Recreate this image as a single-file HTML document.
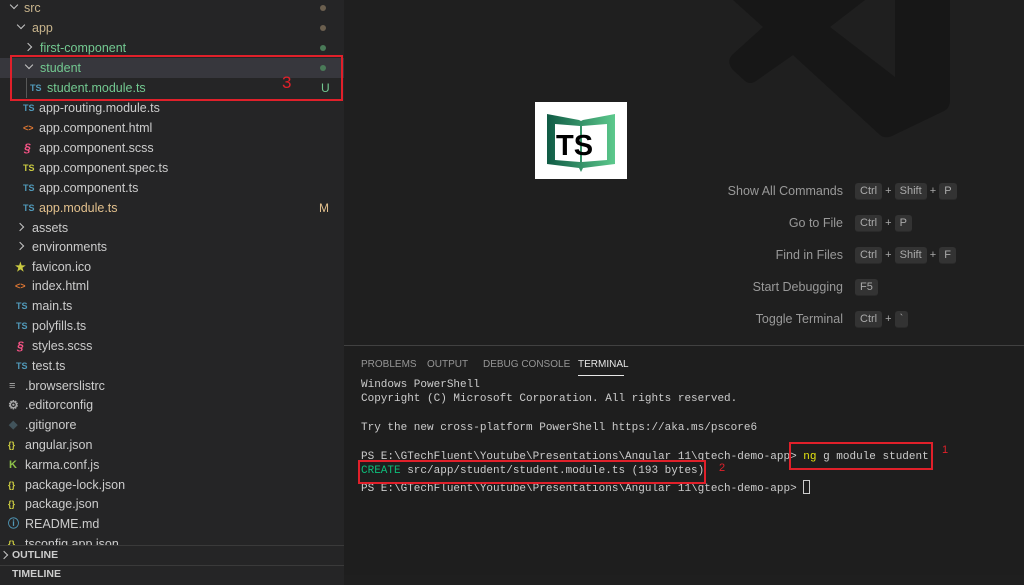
<!DOCTYPE html><html><head><style>
*{margin:0;padding:0;box-sizing:border-box}
body{width:1024px;height:575px;overflow:hidden;background:#1f1f1f;font-family:"Liberation Sans",sans-serif;font-size:12.5px;color:#cccccc;position:relative}
.side{position:absolute;left:0;top:0;width:344px;height:575px;background:#252526}
.r{position:absolute;height:20px;line-height:20px;white-space:nowrap;left:0;width:344px}
.ic{position:absolute;font-size:9px;font-weight:bold;top:0}
.chev{position:absolute;top:6px;width:6px;height:6px;border-right:1.3px solid #c5c5c5;border-bottom:1.3px solid #c5c5c5}
.dn{transform:rotate(45deg);top:4px}
.rt{transform:rotate(-45deg)}
.dot{position:absolute;left:320px;top:7px;width:6px;height:6px;border-radius:50%}
.mono{font-family:"Liberation Mono",monospace;font-size:11px}
.key{display:inline-block;background:#333;border-radius:3px;padding:0 5px;height:17px;line-height:17px;font-size:11px;color:#aaa;border-bottom:1px solid #2a2a2a}
.sc{position:absolute;height:18px;line-height:18px;color:#999;width:0}
.sc .l{position:absolute;right:12px;width:200px;text-align:right;font-size:12.5px}
.sc .k{position:absolute;left:0;white-space:nowrap;font-size:11px;color:#aaa}
.tl{position:absolute;left:361px;white-space:pre;color:#cccccc}
.tab{position:absolute;top:13px;font-size:10px;color:#969696;white-space:nowrap}
</style></head><body>
<svg style="position:absolute;left:0;top:0" width="1024" height="160">
<path d="M733 0 L763 27 L732 55 Q726 62 733 70 L745 81 Q750 85 756 81 L793 55 L880 135 Q885 139 892 136 L944 111 Q950 108 950 100 L950 0 Z M865 0 L895 0 L895 77 L830 27 Z" fill="#171717" fill-rule="evenodd"/>
</svg>
<div class="side">
<div class="r" style="top:-2px"><span class="chev dn" style="left:11px"></span><span style="position:absolute;left:24px;color:#c8b48c">src</span><span class="dot" style="background:#6b5f4e"></span></div>
<div class="r" style="top:18px"><span class="chev dn" style="left:18px"></span><span style="position:absolute;left:32px;color:#c8b48c">app</span><span class="dot" style="background:#6b5f4e"></span></div>
<div class="r" style="top:38px"><span class="chev rt" style="left:25px"></span><span style="position:absolute;left:40px;color:#73c991">first-component</span><span class="dot" style="background:#4a7a58"></span></div>
<div class="r" style="top:58px;background:#37373d"><span class="chev dn" style="left:26px"></span><span style="position:absolute;left:40px;color:#73c991">student</span><span class="dot" style="background:#4a7a58"></span></div>
<div class="r" style="top:78px"><span style="position:absolute;left:26px;top:0;width:1px;height:20px;background:#585858"></span><span class="ic" style="left:30px;color:#519aba">TS</span><span style="position:absolute;left:47px;color:#73c991">student.module.ts</span><span style="position:absolute;left:321px;color:#73c991;font-size:12px">U</span></div>
<div class="r" style="top:98px"><span class="ic" style="left:23px;color:#519aba">TS</span><span style="position:absolute;left:39px">app-routing.module.ts</span></div>
<div class="r" style="top:118px"><span class="ic" style="left:23px;color:#e37933">&lt;&gt;</span><span style="position:absolute;left:39px">app.component.html</span></div>
<div class="r" style="top:138px"><span class="ic" style="left:24px;color:#f55385;font-style:italic;font-size:12px">§</span><span style="position:absolute;left:39px">app.component.scss</span></div>
<div class="r" style="top:158px"><span class="ic" style="left:23px;color:#cbcb41">TS</span><span style="position:absolute;left:39px">app.component.spec.ts</span></div>
<div class="r" style="top:178px"><span class="ic" style="left:23px;color:#519aba">TS</span><span style="position:absolute;left:39px">app.component.ts</span></div>
<div class="r" style="top:198px"><span class="ic" style="left:23px;color:#519aba">TS</span><span style="position:absolute;left:39px;color:#e2c08d">app.module.ts</span><span style="position:absolute;left:319px;color:#e2c08d;font-size:12px">M</span></div>
<div class="r" style="top:218px"><span class="chev rt" style="left:17px"></span><span style="position:absolute;left:32px">assets</span></div>
<div class="r" style="top:237px"><span class="chev rt" style="left:17px"></span><span style="position:absolute;left:32px">environments</span></div>
<div class="r" style="top:257px"><span class="ic" style="left:15px;color:#cbcb41;font-size:12px">★</span><span style="position:absolute;left:32px">favicon.ico</span></div>
<div class="r" style="top:276px"><span class="ic" style="left:15px;color:#e37933">&lt;&gt;</span><span style="position:absolute;left:32px">index.html</span></div>
<div class="r" style="top:296px"><span class="ic" style="left:16px;color:#519aba">TS</span><span style="position:absolute;left:32px">main.ts</span></div>
<div class="r" style="top:316px"><span class="ic" style="left:16px;color:#519aba">TS</span><span style="position:absolute;left:32px">polyfills.ts</span></div>
<div class="r" style="top:336px"><span class="ic" style="left:17px;color:#f55385;font-style:italic;font-size:12px">§</span><span style="position:absolute;left:32px">styles.scss</span></div>
<div class="r" style="top:356px"><span class="ic" style="left:16px;color:#519aba">TS</span><span style="position:absolute;left:32px">test.ts</span></div>
<div class="r" style="top:376px"><span class="ic" style="left:9px;color:#aaa;font-size:11px">≡</span><span style="position:absolute;left:25px">.browserslistrc</span></div>
<div class="r" style="top:395px"><span class="ic" style="left:8px;color:#aaa;font-size:12px">⚙</span><span style="position:absolute;left:25px">.editorconfig</span></div>
<div class="r" style="top:415px"><span class="ic" style="left:9px;color:#41535b;font-size:11px">◆</span><span style="position:absolute;left:25px">.gitignore</span></div>
<div class="r" style="top:435px"><span class="ic" style="left:8px;color:#cbcb41">{}</span><span style="position:absolute;left:25px">angular.json</span></div>
<div class="r" style="top:455px"><span class="ic" style="left:9px;color:#8dc149;font-size:11px">K</span><span style="position:absolute;left:25px">karma.conf.js</span></div>
<div class="r" style="top:475px"><span class="ic" style="left:8px;color:#cbcb41">{}</span><span style="position:absolute;left:25px">package-lock.json</span></div>
<div class="r" style="top:494px"><span class="ic" style="left:8px;color:#cbcb41">{}</span><span style="position:absolute;left:25px">package.json</span></div>
<div class="r" style="top:514px"><span class="ic" style="left:8px;color:#519aba;font-size:11px">ⓘ</span><span style="position:absolute;left:25px">README.md</span></div>
<div class="r" style="top:534px"><span class="ic" style="left:8px;color:#cbcb41">{}</span><span style="position:absolute;left:25px">tsconfig.app.json</span></div>
<div style="position:absolute;top:545px;left:0;width:344px;height:20px;background:#252526;border-top:1px solid #3a3a3a;line-height:19px;font-size:10.5px;font-weight:bold"><span class="chev rt" style="left:1px;top:6px"></span><span style="position:absolute;left:12px">OUTLINE</span></div>
<div style="position:absolute;top:565px;left:0;width:344px;height:20px;background:#252526;border-top:1px solid #3a3a3a;line-height:17px;font-size:10.5px;font-weight:bold"><span style="position:absolute;left:12px">TIMELINE</span></div>
</div>
<div style="position:absolute;left:10px;top:55px;width:333px;height:46px;border:2px solid #e0202a"></div>
<div style="position:absolute;left:282px;top:73px;color:#e0202a;font-size:17px">3</div>

<div style="position:absolute;left:535px;top:102px;width:92px;height:77px;background:#fff">
<svg width="92" height="77" viewBox="0 0 92 77"><defs><linearGradient id="g" x1="0" x2="1"><stop offset="0" stop-color="#0f5a44"/><stop offset="1" stop-color="#5cc98c"/></linearGradient></defs><path d="M12 12 L44 18 L46 19 L48 18 L80 12 L80 62 L48 66 L46 70 L44 66 L12 62Z" fill="url(#g)"/><path d="M20 22 L45 24 L45 60 L20 58Z M47 24 L72 22 L72 58 L47 60Z" fill="#fff"/><text x="21" y="53" font-family="Liberation Sans" font-weight="bold" font-size="29" fill="#000">TS</text></svg></div>

<div class="sc" style="left:855px;top:182px"><span class="l">Show All Commands</span><span class="k"><span class="key">Ctrl</span> + <span class="key">Shift</span> + <span class="key">P</span></span></div>
<div class="sc" style="left:855px;top:214px"><span class="l">Go to File</span><span class="k"><span class="key">Ctrl</span> + <span class="key">P</span></span></div>
<div class="sc" style="left:855px;top:246px"><span class="l">Find in Files</span><span class="k"><span class="key">Ctrl</span> + <span class="key">Shift</span> + <span class="key">F</span></span></div>
<div class="sc" style="left:855px;top:278px"><span class="l">Start Debugging</span><span class="k"><span class="key">F5</span></span></div>
<div class="sc" style="left:855px;top:310px"><span class="l">Toggle Terminal</span><span class="k"><span class="key">Ctrl</span> + <span class="key">`</span></span></div>

<div style="position:absolute;left:344px;top:345px;width:680px;height:230px;background:#1e1e1e;border-top:1px solid #414141">
<span class="tab" style="left:17px">PROBLEMS</span><span class="tab" style="left:83px">OUTPUT</span><span class="tab" style="left:139px">DEBUG CONSOLE</span><span class="tab" style="left:234px;color:#e7e7e7">TERMINAL</span>
<div style="position:absolute;left:234px;top:29px;width:46px;height:1px;background:#e7e7e7"></div>
</div>
<div class="tl mono" style="top:379px">Windows PowerShell</div>
<div class="tl mono" style="top:393px">Copyright (C) Microsoft Corporation. All rights reserved.</div>
<div class="tl mono" style="top:422px">Try the new cross-platform PowerShell https://aka.ms/pscore6</div>
<div class="tl mono" style="top:451px">PS E:\GTechFluent\Youtube\Presentations\Angular 11\gtech-demo-app> <span style="color:#e5e510">ng</span> g module student</div>
<div class="tl mono" style="top:465px"><span style="color:#0dbc79">CREATE</span> src/app/student/student.module.ts (193 bytes)</div>
<div class="tl mono" style="top:480px">PS E:\GTechFluent\Youtube\Presentations\Angular 11\gtech-demo-app> <span style="display:inline-block;width:7px;height:14px;border:1px solid #ccc;vertical-align:-3px"></span></div>
<div style="position:absolute;left:789px;top:442px;width:144px;height:28px;border:2px solid #e0202a"></div>
<div style="position:absolute;left:942px;top:444px;color:#e0202a;font-size:11px">1</div>
<div style="position:absolute;left:358px;top:460px;width:348px;height:24px;border:2px solid #e0202a"></div>
<div style="position:absolute;left:719px;top:462px;color:#e0202a;font-size:11px">2</div>
</body></html>
